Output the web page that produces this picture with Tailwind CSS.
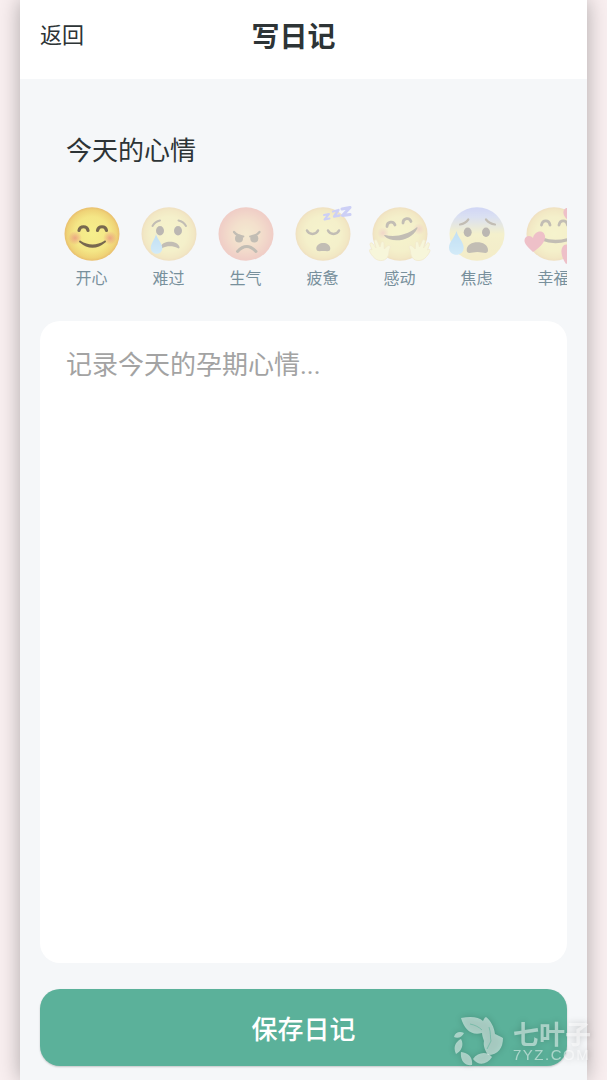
<!DOCTYPE html>
<html lang="zh-CN">
<head>
  <meta charset="UTF-8">
  <meta name="viewport" content="width=device-width, initial-scale=1">
  <title>写日记</title>
  <script src="https://cdn.jsdelivr.net/npm/@tailwindcss/browser@4"></script>
</head>
<body class="bg-[#f9eff0] px-5 font-['Noto_Sans_CJK_SC',sans-serif] text-[#2d3436] overflow-x-hidden">
  <div class="relative flex flex-col min-h-screen bg-[#f5f7f9] shadow-[0_0_20px_rgba(0,0,0,0.3)]">

    <header class="flex items-start justify-between bg-white px-5 pt-4 pb-[25px]">
      <a href="#" class="text-[22px] leading-[34px]">返回</a>
      <h1 class="text-[28px] leading-[38px] font-bold">写日记</h1>
      <span class="w-16"></span>
    </header>

    <main class="flex flex-col flex-1 px-5 pt-[52px] pb-[14px]">
      <h2 class="pl-[26px] text-[26px] leading-9">今天的心情</h2>

      <!-- Estados de ánimo -->
      <div id="moods" class="flex overflow-hidden mt-[37px] mb-8 pl-[13px] text-base leading-6 text-[#78909c]">
        <button type="button" class="shrink-0 w-[77px] flex flex-col items-center gap-px">
          <svg class="w-16 h-[60px]" viewBox="0 0 64 60" fill="none">
            <defs>
              <radialGradient id="yellow"><stop offset="0" stop-color="#f6ef8c"/><stop offset=".65" stop-color="#f4e686"/><stop offset=".9" stop-color="#efd377"/><stop offset="1" stop-color="#e9bf6e"/></radialGradient>
              <radialGradient id="red"><stop offset="0" stop-color="#f3d795"/><stop offset=".5" stop-color="#f1bd8b"/><stop offset="1" stop-color="#e98f7c"/></radialGradient>
              <radialGradient id="cheek"><stop offset="0" stop-color="#e88c80" stop-opacity=".7"/><stop offset="1" stop-color="#e88c80" stop-opacity="0"/></radialGradient>
              <linearGradient id="cold" x1="0" y1="0" x2="0" y2="1"><stop offset="0" stop-color="#9ba6f1"/><stop offset=".18" stop-color="#b3bfe9"/><stop offset=".5" stop-color="#f3e78b"/><stop offset="1" stop-color="#f2dc80"/></linearGradient>
              <linearGradient id="tear" x1="0" y1="0" x2="0" y2="1"><stop offset="0" stop-color="#74bdf0"/><stop offset="1" stop-color="#a0d9f7"/></linearGradient>
            </defs>
            <ellipse cx="32" cy="30" rx="27.5" ry="26.7" fill="url(#yellow)"/>
            <circle cx="15" cy="34" r="7" fill="url(#cheek)"/><circle cx="50" cy="34" r="7" fill="url(#cheek)"/>
            <path d="M19 26.500c1-5 8-5 9 0M37.500 26.500c1-5 8-5 9 0" stroke="#77684f" stroke-width="3.200" stroke-linecap="round"/>
            <path d="M20 37.500Q32.500 48 45 37.500Q32.500 45.500 20 37.500z" fill="#77684f" stroke="#77684f" stroke-width="2" stroke-linejoin="round"/>
          </svg>
          <span>开心</span>
        </button>
        <button type="button" class="shrink-0 w-[77px] flex flex-col items-center gap-px">
          <svg class="w-16 h-[60px] opacity-40" viewBox="0 0 64 60" fill="none">
            <ellipse cx="32" cy="30" rx="27.5" ry="26.7" fill="url(#yellow)"/>
            <path d="M15.500 22q2.500-4.500 7.500-5.500M49 22q-2.500-4.500-7.500-5.500" stroke="#77684f" stroke-width="2" stroke-linecap="round"/>
            <ellipse cx="23" cy="26.700" rx="4" ry="4.700" fill="#66594a"/><ellipse cx="41" cy="26.700" rx="4" ry="4.700" fill="#66594a"/>
            <path d="M23.500 43c2-7 17-7 19 0 .3 1.500-.8 1.700-2 1-4-2.200-11-2.200-15 0-1.500.7-2.500.3-2-1z" fill="#77684f"/>
            <path d="M19 30c1 5 6.300 9 6.300 14 0 8-11.500 7.500-11.500 0 0-5 4.500-9 5.200-14z" fill="url(#tear)"/>
          </svg>
          <span>难过</span>
        </button>
        <button type="button" class="shrink-0 w-[77px] flex flex-col items-center gap-px">
          <svg class="w-16 h-[60px] opacity-40" viewBox="0 0 64 60" fill="none">
            <ellipse cx="32" cy="30" rx="27.5" ry="26.700" fill="url(#red)"/>
            <circle cx="25" cy="34.500" r="4" fill="#77684f"/><circle cx="40.300" cy="34.500" r="4" fill="#77684f"/>
            <path d="M20 28q3 4 9.300 4.500M45.500 28q-3 4-9.300 4.500" stroke="#77684f" stroke-width="2.200" stroke-linecap="round"/>
            <path d="M23.500 47.500Q32.700 37.500 42 47.500" stroke="#77684f" stroke-width="3" stroke-linecap="round"/>
          </svg>
          <span>生气</span>
        </button>
        <button type="button" class="shrink-0 w-[77px] flex flex-col items-center gap-px">
          <svg class="w-16 h-[60px] opacity-40" viewBox="0 0 64 60" fill="none">
            <ellipse cx="32" cy="30" rx="27.5" ry="26.700" fill="url(#yellow)"/>
            <path d="M16 26.500c2 4.500 9 4.500 11 0M37 26.500c2 4.500 9 4.500 11 0" stroke="#77684f" stroke-width="2.500" stroke-linecap="round"/>
            <path d="M25.300 44.500c0-7.500 14-7.500 14 0 0 3.500-3 2.500-7 2.500s-7 1-7-2.500z" fill="#77684f"/>
            <g stroke="#9095f2" stroke-linejoin="round" stroke-linecap="round">
              <path d="M33 11l5-1-4.500 5.500 5-1" stroke-width="2"/>
              <path d="M42 7.500l5.500-1.500-4.500 6.500 5.500-1" stroke-width="2.300"/>
              <path d="M51 5l8-1.500-7.500 8 7.500-1" stroke-width="3"/>
            </g>
          </svg>
          <span>疲惫</span>
        </button>
        <button type="button" class="shrink-0 w-[77px] flex flex-col items-center gap-px">
          <svg class="w-16 h-[60px] opacity-40" viewBox="0 0 64 60" fill="none">
            <ellipse cx="32" cy="30" rx="27.5" ry="26.700" fill="url(#yellow)"/>
            <circle cx="15" cy="29" r="6" fill="url(#cheek)"/><circle cx="51" cy="25" r="6" fill="url(#cheek)"/>
            <path d="M19 22.500c0-5 6.500-6 8-1.500M35 19c0-5 6.500-6 8-1.500" stroke="#77684f" stroke-width="2.800" stroke-linecap="round"/>
            <path d="M17 31c10 2.500 22 0 31.500-7.500.8-.5 1.300 0 .8 1-6 13-26 15-32.800 7.500-.5-.7-.3-1.200.5-1z" fill="#77684f"/>
            <g id="hand">
              <path d="M7 54.500C4 52 1.500 48 1.500 46.500c0-1.300 1.500-1.500 2.500-.5L2 40.500c-.3-1.800 2-2.300 2.800-.8L8 44 6.300 37.500c-.3-2 2.400-2.500 3-.5L12 43l1-4c.5-2 3-1.700 3 .3l.3 5.700 3-3c1.700-1.300 3.700 0 2.900 1.800-1.500 3-1 5-2 8-2 5.500-9 6-13.200 2.700z" fill="#faf5ae" stroke="#efd58e" stroke-width=".8"/>
            </g>
            <use href="#hand" transform="matrix(-1 0 0 1 63.500 0)"/>
          </svg>
          <span>感动</span>
        </button>
        <button type="button" class="shrink-0 w-[77px] flex flex-col items-center gap-px">
          <svg class="w-16 h-[60px] opacity-40" viewBox="0 0 64 60" fill="none">
            <ellipse cx="32" cy="30" rx="27.5" ry="26.700" fill="url(#cold)"/>
            <path d="M15 20.500q5.500-1 8.300-5M50 20.500q-6-1-9-5" stroke="#77684f" stroke-width="2.200" stroke-linecap="round"/>
            <ellipse cx="22.700" cy="28.300" rx="4" ry="4.700" fill="#66594a"/><ellipse cx="41" cy="28.300" rx="4" ry="4.700" fill="#66594a"/>
            <path d="M21.700 46c0-10.500 21.300-10.500 21.300 0 0 5-5 2-10.600 2s-10.700 3-10.700-2z" fill="#77684f"/>
            <path d="M11.500 27c1 5.500 7.200 11 7.200 16.500 0 10-14.700 9.500-14.700 0C4 38 10 33 11.500 27z" fill="url(#tear)"/>
          </svg>
          <span>焦虑</span>
        </button>
        <button type="button" class="shrink-0 w-[77px] flex flex-col items-center gap-px">
          <svg class="w-16 h-[60px] opacity-40" viewBox="0 0 64 60" fill="none">
            <ellipse cx="32" cy="30" rx="27.5" ry="26.700" fill="url(#yellow)"/>
            <path d="M19.500 21c1-5.500 7.500-5.500 8.500 0M37 21c1-5.500 7.500-5.500 8.500 0" stroke="#77684f" stroke-width="2.800" stroke-linecap="round"/>
            <path d="M20 35q13 5 28 0" stroke="#77684f" stroke-width="3.300" stroke-linecap="round"/>
            <path d="M11 48C7 44 2 40 2.500 36c.5-4.500 6-5.500 8.500-2 1-6 8-8.500 11-4.500C26 35 19 43 11 48z" fill="#e56f80"/>
            <path d="M44 60c-4-6-6-13-3.500-17 2-4 7-3 8 1 3-4 9-3 9.500 1 .5 6-7 11-14 15z" fill="#e56f80"/>
            <path d="M47 17c-4-3-7-7-5-11 2-3 5-2 6 0 2-3 7-2 7 2 0 4-4 7-8 9z" fill="#e56f80"/>
          </svg>
          <span>幸福</span>
        </button>
      </div>

      <textarea aria-label="日记内容" placeholder="记录今天的孕期心情..." class="block flex-1 w-full resize-none rounded-[20px] bg-white p-[26px] font-[Roboto,'Noto_Sans_CJK_SC',sans-serif] text-[26px] leading-9 placeholder:text-[#a3a3a3] outline-none"></textarea>

      <button type="button" class="mt-[26px] h-[77px] rounded-[20px] bg-[#5bb19a] text-[26px] leading-9 font-medium text-white shadow-[0_1px_2px_rgba(0,0,0,0.2)]">保存日记</button>
    </main>
  </div>

  <!-- Marca de agua -->
  <div class="fixed right-4 bottom-3 flex items-center gap-[7px] text-white/50 pointer-events-none drop-shadow-[0_0_3px_rgba(0,0,0,0.35)]">
    <svg class="w-[54px] h-[54px]" viewBox="0 0 54 54" fill="currentColor">
      <path d="M9 4c10-2 18-1 22 3 1-2 1-3 3-4 5 4 8 10 9 17 2 1 5 2 8 4 0 10-5 17-15 17-3-5-5-9-4-14-1-3-2-6-2-8C19 22 12 15 9 4z"/>
      <path d="M21 45c5-7 14-8 19-2-5 8-14 9-19 2zM9 38c8 1 12 6 11 13C13 52 8 47 9 38zM9 25c3 5 1 12-5 15-3-6-1-12 5-15zM2 23c1-5 6-6 10-4-2 4-6 6-10 4z"/>
      <path d="M18 10c5 1 9 3 12 6M37 13c2 6 1 10 2 14l-4 8" fill="none" stroke="#5bb19a" stroke-opacity=".6"/>
    </svg>
    <div class="flex flex-col">
      <span class="text-[26px] leading-7 font-bold">七叶子</span>
      <span class="font-['Liberation_Sans',sans-serif] text-[15px] leading-4 tracking-widest">7YZ.COM</span>
    </div>
  </div>

  <script>
    // Selección del estado de ánimo
    const moods = document.querySelectorAll('#moods button');
    moods.forEach((btn) => {
      btn.addEventListener('click', () => {
        moods.forEach((b) => b.querySelector('svg').classList.toggle('opacity-40', b !== btn));
      });
    });
  </script>
</body>
</html>
